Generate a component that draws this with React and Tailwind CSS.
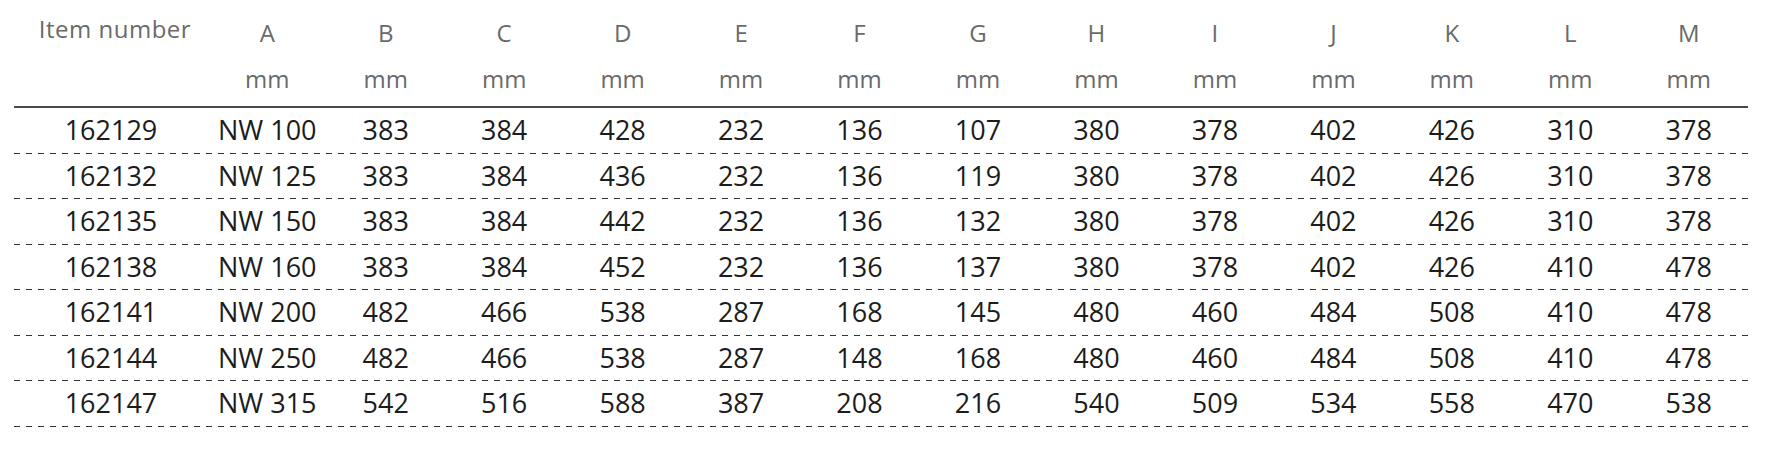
import React from "react";

const letters = ["A", "B", "C", "D", "E", "F", "G", "H", "I", "J", "K", "L", "M"];

const rows = [
  ["162129", "NW 100", "383", "384", "428", "232", "136", "107", "380", "378", "402", "426", "310", "378"],
  ["162132", "NW 125", "383", "384", "436", "232", "136", "119", "380", "378", "402", "426", "310", "378"],
  ["162135", "NW 150", "383", "384", "442", "232", "136", "132", "380", "378", "402", "426", "310", "378"],
  ["162138", "NW 160", "383", "384", "452", "232", "136", "137", "380", "378", "402", "426", "410", "478"],
  ["162141", "NW 200", "482", "466", "538", "287", "168", "145", "480", "460", "484", "508", "410", "478"],
  ["162144", "NW 250", "482", "466", "538", "287", "148", "168", "480", "460", "484", "508", "410", "478"],
  ["162147", "NW 315", "542", "516", "588", "387", "208", "216", "540", "509", "534", "558", "470", "538"],
];

const cols = "grid grid-cols-[194px_repeat(13,1fr)]";

export default function App() {
  return (
    <div className="bg-white w-[1778px] h-[457px] font-['Open_Sans',sans-serif]">
      <div className="ml-[14px] w-[1734px]">
        {/* header */}
        <div className={`${cols} h-[60px] items-center text-[#6a6a6a] text-[24px]`}>
          <div className="text-center mb-[2px] pl-[8px] tracking-[0.5px]">Item number</div>
          {letters.map((l) => (
            <div key={l} className="text-center mt-[6px]">
              {l}
            </div>
          ))}
        </div>
        <div className={`${cols} h-[38px] items-center text-[#6a6a6a] text-[24px]`}>
          <div />
          {letters.map((l) => (
            <div key={l} className="text-center">
              mm
            </div>
          ))}
        </div>
        <div className="h-[8px]" />
        <div className="h-[2px] bg-[#4a4a4a]" />

        {/* body */}
        {rows.map((r) => (
          <div key={r[0]}>
            <div className={`${cols} h-[44.5px] items-center text-[27px] text-[#1c1c1c]`}>
              {r.map((v, i) => (
                <div key={i} className="text-center">
                  {v}
                </div>
              ))}
            </div>
            <div className="h-px bg-[repeating-linear-gradient(to_right,#333_0_6px,transparent_6px_12px)]" />
          </div>
        ))}
      </div>
    </div>
  );
}
